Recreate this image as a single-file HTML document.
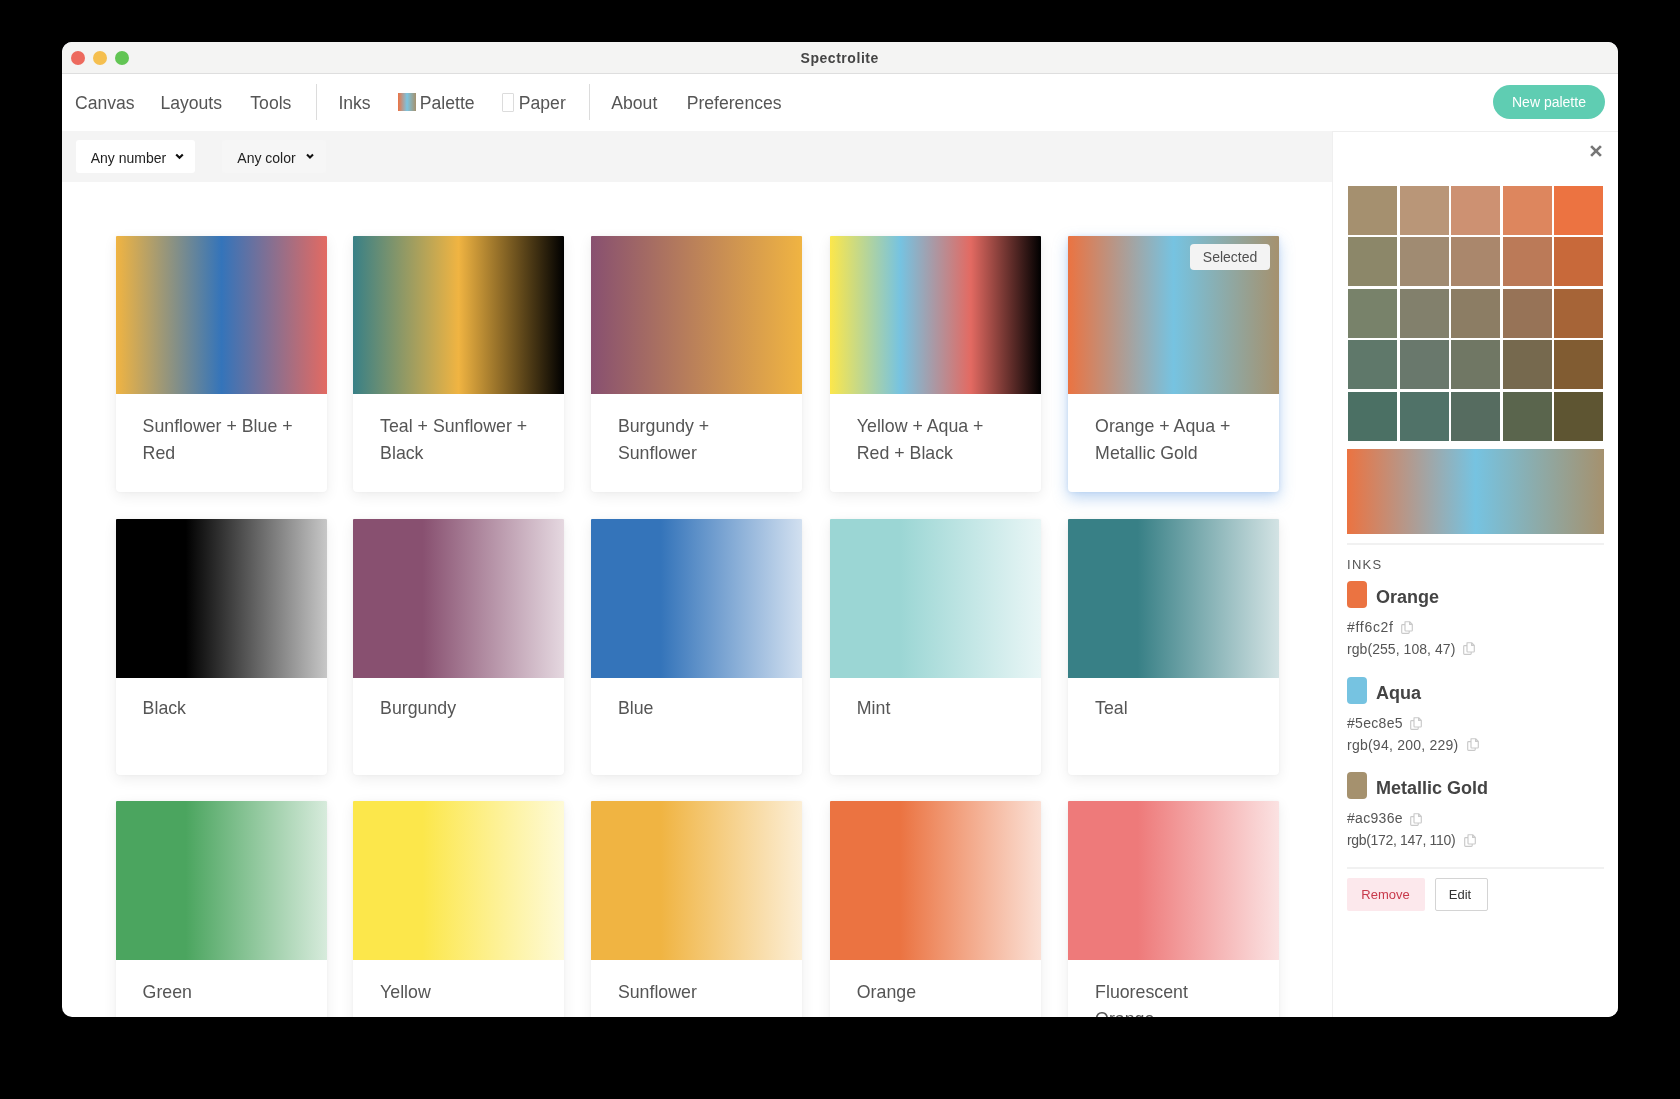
<!DOCTYPE html>
<html>
<head>
<meta charset="utf-8">
<style>
html,body{margin:0;padding:0;}
body{-webkit-font-smoothing:antialiased;width:1680px;height:1099px;background:#000;position:relative;overflow:hidden;font-family:"Liberation Sans",sans-serif;}
.win{will-change:transform;position:absolute;left:62px;top:42px;width:1556px;height:975px;background:#fff;border-radius:10px;overflow:hidden;}
.a{position:absolute;white-space:nowrap;line-height:1;}
.title{left:0;top:0;width:1556px;height:31px;background:#f4f4f3;border-bottom:1px solid #dedede;}
.dot{position:absolute;width:14px;height:14px;border-radius:50%;top:9px;}
.navt{font-size:17.6px;color:#555;margin-left:-1px;margin-top:0.8px;}
.sep{position:absolute;width:1px;background:#dcdcdc;top:42px;height:36px;}
.fbar{position:absolute;left:0;top:89px;width:1270px;height:51px;background:#f4f4f4;}
.sel{position:absolute;top:9px;height:33px;border-radius:3px;}
.card{position:absolute;width:211px;height:256px;background:#fff;border-radius:1px 1px 4px 4px;box-shadow:0 4px 14px rgba(0,0,0,0.075),0 0 3px rgba(0,0,0,0.045);overflow:hidden;}
.card .img{position:absolute;left:0;top:0;width:211px;height:158.7px;}
.card .tx{position:absolute;left:27px;top:177.5px;font-size:17.75px;line-height:27px;color:#555;width:180px;white-space:normal;}
.side{position:absolute;left:1270px;top:90px;width:286px;height:885px;background:#fff;border-left:1px solid #efefef;}
.grid{position:absolute;left:1286px;top:143.7px;width:255px;height:255px;display:grid;grid-template-columns:repeat(5,1fr);grid-template-rows:repeat(5,1fr);gap:2.5px;}
.selc{box-shadow:0 6px 15px rgba(80,145,220,0.38),0 0 4px rgba(90,150,220,0.18);}
.badge{position:absolute;left:122px;top:8.5px;width:80px;height:26px;border-radius:4px;background:#f3f3f3;color:#505050;font-size:14px;line-height:26px;text-align:center;}
.chev{position:absolute;}
</style>
</head>
<body>
<div class="win">
  <div class="a title"></div>
  <div class="dot" style="left:8.7px;background:#ed6a5e;"></div>
  <div class="dot" style="left:31px;background:#f5bf4f;"></div>
  <div class="dot" style="left:53.2px;background:#62c554;"></div>
  <div class="a" style="left:738.5px;top:9px;font-size:14px;font-weight:bold;color:#454545;letter-spacing:0.55px;">Spectrolite</div>

  <!-- nav -->
  <div class="a navt" style="left:14px;top:52px;">Canvas</div>
  <div class="a navt" style="left:99.4px;top:52px;">Layouts</div>
  <div class="a navt" style="left:189.3px;top:52px;">Tools</div>
  <div class="sep" style="left:254px;"></div>
  <div class="a navt" style="left:277.4px;top:52px;">Inks</div>
  <div class="a" style="left:335.6px;top:51px;width:18px;height:18px;background:linear-gradient(to right,#ec7343 0%,#7cc4e0 50%,#a5916e 100%);"></div>
  <div class="a navt" style="left:358.8px;top:52px;">Palette</div>
  <div class="a" style="left:440px;top:51px;width:10px;height:17px;border:1px solid #dcdcdc;border-radius:1px;"></div>
  <div class="a navt" style="left:457.8px;top:52px;">Paper</div>
  <div class="sep" style="left:527.4px;"></div>
  <div class="a navt" style="left:550.3px;top:52px;">About</div>
  <div class="a navt" style="left:625.7px;top:52px;">Preferences</div>
  <div class="a" style="left:1431.2px;top:43.4px;width:111.4px;height:33.4px;border-radius:17px;background:#5fcdb2;"></div>
  <div class="a" style="left:1450px;top:53px;font-size:14px;color:#fff;">New palette</div>
  <div class="a" style="left:0;top:89px;width:1556px;height:1px;background:#eeeeee;"></div>

  <!-- filter bar -->
  <div class="fbar">
    <div class="sel" style="left:13.8px;width:119.5px;background:#fff;"></div>
    <div class="sel" style="left:160px;width:103.7px;background:#f6f6f6;"></div>
    <div class="a" style="left:28.7px;top:20px;font-size:14px;color:#222;">Any number</div>
    <div class="a" style="left:175.3px;top:20px;font-size:14px;color:#222;">Any color</div>
    <svg class="chev" style="left:112.8px;top:22px;" width="9" height="7" viewBox="0 0 9 7"><path d="M1.2 1.5 L4.5 4.8 L7.8 1.5" fill="none" stroke="#111" stroke-width="2.2"/></svg>
    <svg class="chev" style="left:244px;top:22px;" width="8" height="7" viewBox="0 0 8 7"><path d="M1 1.5 L4 4.5 L7 1.5" fill="none" stroke="#111" stroke-width="2.1"/></svg>
  </div>

  <div id="cards">
  <div class="card" style="left:53.6px;top:193.7px;"><div class="img" style="background:linear-gradient(to right,#f0b442 0.0%,#3474ba 50.0%,#e36a62 100.0%);"></div><div class="tx">Sunflower + Blue +<br>Red</div></div>
  <div class="card" style="left:291.1px;top:193.7px;"><div class="img" style="background:linear-gradient(to right,#388086 0.0%,#f0b442 50.0%,#000000 100.0%);"></div><div class="tx">Teal + Sunflower +<br>Black</div></div>
  <div class="card" style="left:528.9px;top:193.7px;"><div class="img" style="background:linear-gradient(to right,#885070 0.0%,#f0b442 100.0%);"></div><div class="tx">Burgundy +<br>Sunflower</div></div>
  <div class="card" style="left:767.8px;top:193.7px;"><div class="img" style="background:linear-gradient(to right,#fce74b 0.0%,#76c3e1 33.33%,#e36a62 66.67%,#000000 100.0%);"></div><div class="tx">Yellow + Aqua +<br>Red + Black</div></div>
  <div class="card selc" style="left:1006.1px;top:193.7px;"><div class="img" style="background:linear-gradient(to right,#eb7341 0.0%,#76c3e1 50.0%,#a5916e 100.0%);"></div><div class="badge">Selected</div><div class="tx">Orange + Aqua +<br>Metallic Gold</div></div>
  <div class="card" style="left:53.6px;top:477.2px;"><div class="img" style="background:linear-gradient(to right,#000000 0%,#000000 33%,#c7c7c7 100%);"></div><div class="tx" style="top:176.2px;">Black</div></div>
  <div class="card" style="left:291.1px;top:477.2px;"><div class="img" style="background:linear-gradient(to right,#885070 0%,#885070 33%,#e5d8e0 100%);"></div><div class="tx" style="top:176.2px;">Burgundy</div></div>
  <div class="card" style="left:528.9px;top:477.2px;"><div class="img" style="background:linear-gradient(to right,#3474ba 0%,#3474ba 33%,#d2e0f0 100%);"></div><div class="tx" style="top:176.2px;">Blue</div></div>
  <div class="card" style="left:767.8px;top:477.2px;"><div class="img" style="background:linear-gradient(to right,#9bd6d4 0%,#9bd6d4 33%,#e9f6f6 100%);"></div><div class="tx" style="top:176.2px;">Mint</div></div>
  <div class="card" style="left:1006.1px;top:477.2px;"><div class="img" style="background:linear-gradient(to right,#388086 0%,#388086 33%,#d3e3e4 100%);"></div><div class="tx" style="top:176.2px;">Teal</div></div>
  <div class="card" style="left:53.6px;top:759.2px;"><div class="img" style="background:linear-gradient(to right,#4ba55f 0%,#4ba55f 33%,#d7ebdc 100%);"></div><div class="tx">Green</div></div>
  <div class="card" style="left:291.1px;top:759.2px;"><div class="img" style="background:linear-gradient(to right,#fce74b 0%,#fce74b 33%,#fefad7 100%);"></div><div class="tx">Yellow</div></div>
  <div class="card" style="left:528.9px;top:759.2px;"><div class="img" style="background:linear-gradient(to right,#f0b442 0%,#f0b442 33%,#fceed5 100%);"></div><div class="tx">Sunflower</div></div>
  <div class="card" style="left:767.8px;top:759.2px;"><div class="img" style="background:linear-gradient(to right,#eb7341 0%,#eb7341 33%,#fbe0d5 100%);"></div><div class="tx">Orange</div></div>
  <div class="card" style="left:1006.1px;top:759.2px;"><div class="img" style="background:linear-gradient(to right,#ee7a7a 0%,#ee7a7a 33%,#fbe2e2 100%);"></div><div class="tx">Fluorescent<br>Orange</div></div>
  </div><!--/cards-->

  <div class="side"></div>
  <div id="sidec">
  <svg class="a" style="left:1528px;top:103px;" width="12" height="12" viewBox="0 0 12 12"><path d="M1.1 1.1 L10.9 10.9 M10.9 1.1 L1.1 10.9" stroke="#777" stroke-width="2.7" stroke-linecap="butt"/></svg>
  <div class="grid"><div style="background:#a5906f;"></div><div style="background:#b99678;"></div><div style="background:#cd9172;"></div><div style="background:#dd865e;"></div><div style="background:#ec7341;"></div><div style="background:#8c8769;"></div><div style="background:#a08b72;"></div><div style="background:#aa876c;"></div><div style="background:#bb7a58;"></div><div style="background:#c8693a;"></div><div style="background:#78826a;"></div><div style="background:#82806c;"></div><div style="background:#8c7d64;"></div><div style="background:#977357;"></div><div style="background:#a66437;"></div><div style="background:#5f786a;"></div><div style="background:#69786c;"></div><div style="background:#707764;"></div><div style="background:#76694e;"></div><div style="background:#815c32;"></div><div style="background:#4b7064;"></div><div style="background:#507268;"></div><div style="background:#566c60;"></div><div style="background:#5a654d;"></div><div style="background:#5e5532;"></div></div>
  <div class="a" style="left:1284.8px;top:406.9px;width:257.7px;height:85.4px;background:linear-gradient(to right,#eb7341 0%,#76c3e1 50%,#a5916e 100%);"></div>
  <div class="a" style="left:1285px;top:501px;width:257px;height:2px;background:#f1f1f1;"></div>
  <div class="a" style="left:1285px;top:516.2px;font-size:13px;letter-spacing:1.3px;color:#555;">INKS</div>
  <div class="a" style="left:1285px;top:539.0px;width:20px;height:27px;border-radius:4px;background:#eb7341;"></div>
  <div class="a" style="left:1313.9px;top:545.9px;font-size:18px;font-weight:bold;color:#444;">Orange</div>
  <div class="a" style="left:1285px;top:577.8px;font-size:14px;color:#555;letter-spacing:0.7px;">#ff6c2f</div>
  <div class="a" style="left:1285px;top:599.8px;font-size:14px;color:#555;letter-spacing:0.06px;">rgb(255, 108, 47)</div>
  <svg class="a" style="left:1338.8px;top:579.4px;" width="12" height="13" viewBox="0 0 12 13"><path d="M4 0.7 H8.6 L11.3 3.4 V9.2 Q11.3 10 10.5 10 H4.8 Q4 10 4 9.2 V1.5 Q4 0.7 4.8 0.7 Z M8.6 0.7 V3.4 H11.3" fill="none" stroke="#c9c9c9" stroke-width="1.15" stroke-linejoin="round"/><path d="M4 3.6 H1.5 Q0.7 3.6 0.7 4.4 V11.5 Q0.7 12.3 1.5 12.3 H7.4 Q8.2 12.3 8.2 11.5 V10" fill="none" stroke="#c9c9c9" stroke-width="1.15"/></svg>
  <svg class="a" style="left:1401px;top:600.2px;" width="12" height="13" viewBox="0 0 12 13"><path d="M4 0.7 H8.6 L11.3 3.4 V9.2 Q11.3 10 10.5 10 H4.8 Q4 10 4 9.2 V1.5 Q4 0.7 4.8 0.7 Z M8.6 0.7 V3.4 H11.3" fill="none" stroke="#c9c9c9" stroke-width="1.15" stroke-linejoin="round"/><path d="M4 3.6 H1.5 Q0.7 3.6 0.7 4.4 V11.5 Q0.7 12.3 1.5 12.3 H7.4 Q8.2 12.3 8.2 11.5 V10" fill="none" stroke="#c9c9c9" stroke-width="1.15"/></svg>
  <div class="a" style="left:1285px;top:634.7px;width:20px;height:27px;border-radius:4px;background:#76c3e1;"></div>
  <div class="a" style="left:1313.9px;top:641.6px;font-size:18px;font-weight:bold;color:#444;">Aqua</div>
  <div class="a" style="left:1285px;top:673.5px;font-size:14px;color:#555;letter-spacing:0.31px;">#5ec8e5</div>
  <div class="a" style="left:1285px;top:695.5px;font-size:14px;color:#555;letter-spacing:0.24px;">rgb(94, 200, 229)</div>
  <svg class="a" style="left:1348.3px;top:675.3px;" width="12" height="13" viewBox="0 0 12 13"><path d="M4 0.7 H8.6 L11.3 3.4 V9.2 Q11.3 10 10.5 10 H4.8 Q4 10 4 9.2 V1.5 Q4 0.7 4.8 0.7 Z M8.6 0.7 V3.4 H11.3" fill="none" stroke="#c9c9c9" stroke-width="1.15" stroke-linejoin="round"/><path d="M4 3.6 H1.5 Q0.7 3.6 0.7 4.4 V11.5 Q0.7 12.3 1.5 12.3 H7.4 Q8.2 12.3 8.2 11.5 V10" fill="none" stroke="#c9c9c9" stroke-width="1.15"/></svg>
  <svg class="a" style="left:1404.9px;top:696.2px;" width="12" height="13" viewBox="0 0 12 13"><path d="M4 0.7 H8.6 L11.3 3.4 V9.2 Q11.3 10 10.5 10 H4.8 Q4 10 4 9.2 V1.5 Q4 0.7 4.8 0.7 Z M8.6 0.7 V3.4 H11.3" fill="none" stroke="#c9c9c9" stroke-width="1.15" stroke-linejoin="round"/><path d="M4 3.6 H1.5 Q0.7 3.6 0.7 4.4 V11.5 Q0.7 12.3 1.5 12.3 H7.4 Q8.2 12.3 8.2 11.5 V10" fill="none" stroke="#c9c9c9" stroke-width="1.15"/></svg>
  <div class="a" style="left:1285px;top:730.4px;width:20px;height:27px;border-radius:4px;background:#a5916e;"></div>
  <div class="a" style="left:1313.9px;top:737.3px;font-size:18px;font-weight:bold;color:#444;">Metallic Gold</div>
  <div class="a" style="left:1285px;top:769.1px;font-size:14px;color:#555;letter-spacing:0.31px;">#ac936e</div>
  <div class="a" style="left:1285px;top:791.1px;font-size:14px;color:#555;letter-spacing:-0.33px;">rgb(172, 147, 110)</div>
  <svg class="a" style="left:1348.3px;top:770.9px;" width="12" height="13" viewBox="0 0 12 13"><path d="M4 0.7 H8.6 L11.3 3.4 V9.2 Q11.3 10 10.5 10 H4.8 Q4 10 4 9.2 V1.5 Q4 0.7 4.8 0.7 Z M8.6 0.7 V3.4 H11.3" fill="none" stroke="#c9c9c9" stroke-width="1.15" stroke-linejoin="round"/><path d="M4 3.6 H1.5 Q0.7 3.6 0.7 4.4 V11.5 Q0.7 12.3 1.5 12.3 H7.4 Q8.2 12.3 8.2 11.5 V10" fill="none" stroke="#c9c9c9" stroke-width="1.15"/></svg>
  <svg class="a" style="left:1402.3px;top:791.8px;" width="12" height="13" viewBox="0 0 12 13"><path d="M4 0.7 H8.6 L11.3 3.4 V9.2 Q11.3 10 10.5 10 H4.8 Q4 10 4 9.2 V1.5 Q4 0.7 4.8 0.7 Z M8.6 0.7 V3.4 H11.3" fill="none" stroke="#c9c9c9" stroke-width="1.15" stroke-linejoin="round"/><path d="M4 3.6 H1.5 Q0.7 3.6 0.7 4.4 V11.5 Q0.7 12.3 1.5 12.3 H7.4 Q8.2 12.3 8.2 11.5 V10" fill="none" stroke="#c9c9c9" stroke-width="1.15"/></svg>
  <div class="a" style="left:1285px;top:824.7px;width:257px;height:2px;background:#f1f1f1;"></div>
  <div class="a" style="left:1285px;top:836.4px;width:78px;height:32.4px;background:#fce8ec;border-radius:2px;"></div>
  <div class="a" style="left:1299.3px;top:846px;font-size:13px;color:#c8394b;">Remove</div>
  <div class="a" style="left:1372.5px;top:836.4px;width:51px;height:30.4px;border:1px solid #d4d4d4;border-radius:2px;"></div>
  <div class="a" style="left:1386.8px;top:846px;font-size:13px;color:#333;">Edit</div>
  </div><!--/sidec-->
</div>
</body>
</html>
